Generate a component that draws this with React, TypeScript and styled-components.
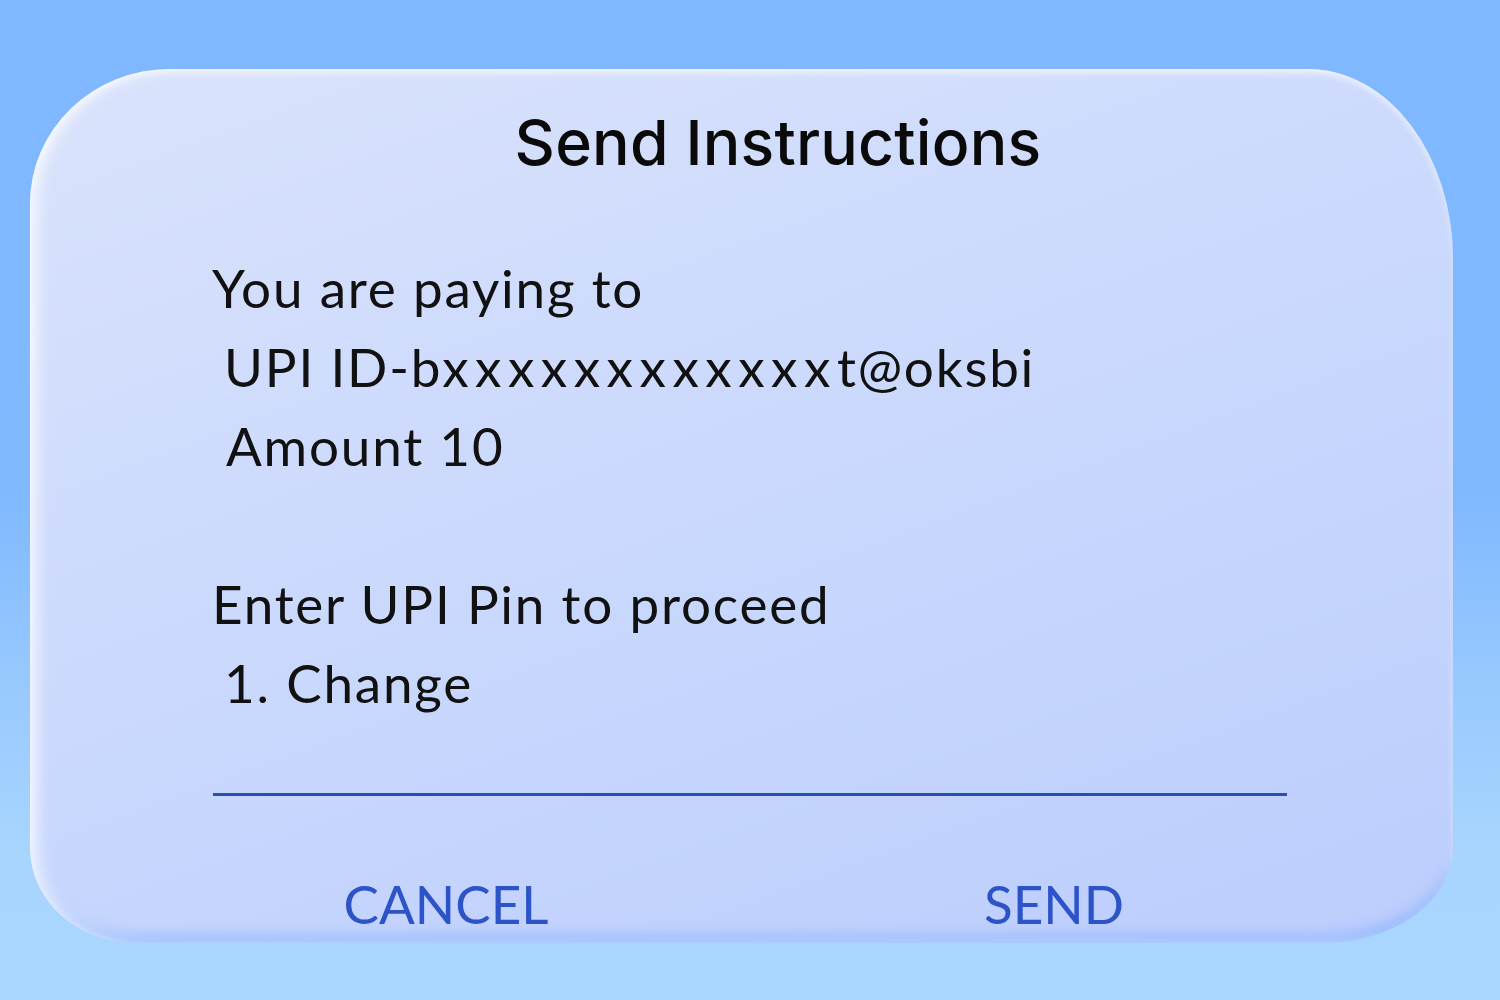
import React from "react";
import styled, { createGlobalStyle } from "styled-components";

const Global = createGlobalStyle`
  html, body { margin: 0; padding: 0; }
  body {
    width: 1500px;
    height: 1000px;
    overflow: hidden;
    background: linear-gradient(180deg, #7fb8fe 0%, #80b9fe 50%, #98c9fe 68%, #a8d5fe 85%, #aad7fe 100%);
    font-family: Lato, "Noto Sans", sans-serif;
  }
`;

const Page = styled.div`
  width: 1500px;
  height: 1000px;
  padding: 69px 0 0 30px;
  box-sizing: border-box;
`;

const Card = styled.div`
  width: 1423px;
  height: 874px;
  box-sizing: border-box;
  border-radius: 140px 145px 130px 105px / 135px 190px 95px 95px;
  background: linear-gradient(160deg, #dae3fb 0%, #d0dcfc 30%, #c6d6fd 60%, #bccdfd 100%);
  box-shadow:
    inset 10px 0 16px -4px rgba(255, 255, 255, 0.9),
    inset 0 6px 10px -4px rgba(255, 255, 255, 0.7),
    inset 0 -12px 14px -6px rgba(120, 170, 253, 0.8),
    inset -6px 0 10px -4px rgba(255, 255, 255, 0.35);
  display: flex;
  flex-direction: column;
  padding: 33px 166px 0 182px;
`;

const Title = styled.h1`
  margin: 0 0 0 57px;
  font-family: Inter, "Noto Sans", sans-serif;
  font-weight: 500;
  font-size: 62.5px;
  line-height: 80px;
  color: #0a0a0a;
  text-align: center;
  letter-spacing: 0.2px;
`;

const Body = styled.div`
  margin-top: 66px;
  display: flex;
  flex-direction: column;
`;

const Line = styled.div<{ $indent?: number }>`
  font-family: Lato, "Noto Sans", sans-serif;
  font-weight: 400;
  font-size: 53px;
  line-height: 79px;
  height: 79px;
  color: #111;
  white-space: pre;
  letter-spacing: 1.8px;
  padding-left: ${(p) => p.$indent ?? 0}px;
`;

const Mask = styled.span`
  letter-spacing: 6.5px;
`;

const Divider = styled.div`
  margin-top: 71px;
  height: 3px;
  background: #2a4fb2;
  margin-left: 1px;
`;

const Actions = styled.div`
  display: grid;
  grid-template-columns: 466px 466px;
  justify-content: space-between;
  margin-top: 78px;
  margin-left: 1px;
`;

const ActionButton = styled.button`
  border: none;
  background: transparent;
  padding: 0;
  font-family: Lato, "Noto Sans", sans-serif;
  font-weight: 400;
  font-size: 53px;
  line-height: 60px;
  color: #2d53c8;
  text-align: center;
  cursor: pointer;
`;

export default function App() {
  return (
    <>
      <Global />
      <Page>
        <Card>
          <Title>Send Instructions</Title>
          <Body>
            <Line>You are paying to</Line>
            <Line $indent={12}>
              UPI ID-b<Mask>xxxxxxxxxxxx</Mask>t@oksbi
            </Line>
            <Line $indent={14}>Amount 10</Line>
            <Line />
            <Line>Enter UPI Pin to proceed</Line>
            <Line $indent={12}>1. Change</Line>
          </Body>
          <Divider />
          <Actions>
            <ActionButton>CANCEL</ActionButton>
            <ActionButton>SEND</ActionButton>
          </Actions>
        </Card>
      </Page>
    </>
  );
}
